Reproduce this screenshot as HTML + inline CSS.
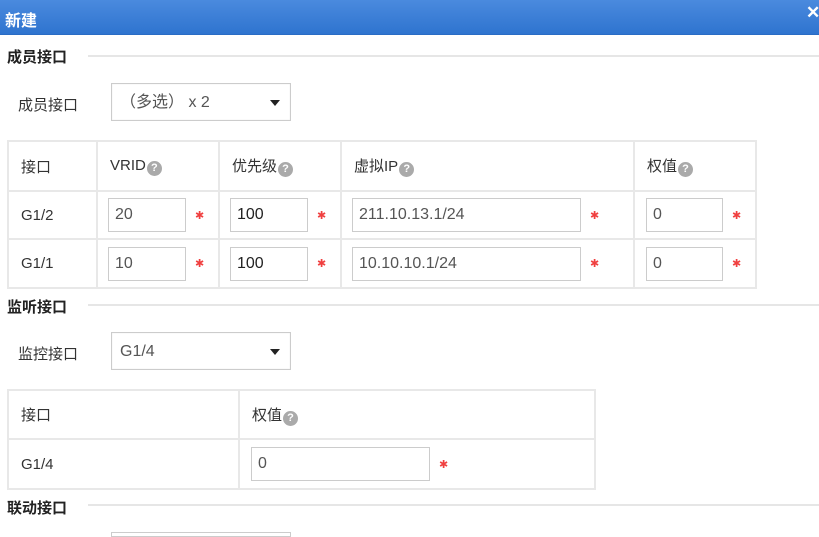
<!DOCTYPE html>
<html><head><meta charset="utf-8"><style>
*{margin:0;padding:0;box-sizing:border-box}
body{width:819px;height:535px;overflow:hidden;background:#fff;font-family:"Liberation Sans","Noto Sans CJK SC",sans-serif;font-size:14px;color:#333;position:relative}
.a{position:absolute}
.title{left:0;top:0;width:819px;height:35px;background:linear-gradient(#4a8ade,#2f74cf);border-bottom:1px solid #2a6cc4}
.title span{position:absolute;left:5px;top:7px;color:#fff;font-weight:bold;font-size:16px}
.close{left:806px;top:3px;color:#fff;font-weight:bold;font-size:17px}
.sec{font-weight:bold;font-size:15px;color:#222}
.line{height:2px;background:#e6e6e6}
.sel{border:1px solid #ccc;background:#fff;height:38px;width:180px;box-shadow:inset 0 0 1px #ddd}
.sel span{position:absolute;left:8px;top:0;line-height:38px;color:#555;font-size:16px}
.sel i{position:absolute;right:10px;top:16px;width:0;height:0;border-left:5px solid transparent;border-right:5px solid transparent;border-top:6px solid #222}
table{position:absolute;border-collapse:collapse}
td{border:2px solid #e8e8e8;padding:0 0 0 12px;font-size:15px;color:#333;position:relative;vertical-align:middle}
.in{display:inline-block;border:1px solid #ccc;height:34px;vertical-align:middle;padding:0 0 0 6px;line-height:32px;font-size:16px;color:#555}
.st{color:#f04040;font-size:11px;margin-left:9px;vertical-align:middle}
.q{display:inline-block;width:15px;height:15px;border-radius:50%;background:#aaa;color:#fff;font-size:11px;font-weight:bold;text-align:center;line-height:15px;margin-left:1px;vertical-align:-1px}
</style></head><body>
<div class="a title"><span>新建</span></div>
<div class="a close">✕</div>

<div class="a sec" style="left:7px;top:46px">成员接口</div>
<div class="a line" style="left:88px;top:55px;width:731px"></div>
<div class="a" style="left:18px;top:94px;font-size:15px">成员接口</div>
<div class="a sel" style="left:111px;top:83px"><span>（多选） x 2</span><i></i></div>

<table style="left:7px;top:140px">
<tr style="height:50px"><td style="width:89px">接口</td><td style="width:122px">VRID<span class="q">?</span></td><td style="width:122px">优先级<span class="q">?</span></td><td style="width:293px">虚拟IP<span class="q">?</span></td><td style="width:122px">权值<span class="q">?</span></td></tr>
<tr style="height:48px"><td>G1/2</td><td style="padding-left:10px"><span class="in" style="width:78px">20</span><span class="st">✱</span></td><td style="padding-left:10px"><span class="in" style="width:78px;color:#222">100</span><span class="st">✱</span></td><td style="padding-left:10px"><span class="in" style="width:229px">211.10.13.1/24</span><span class="st">✱</span></td><td style="padding-left:11px"><span class="in" style="width:77px">0</span><span class="st">✱</span></td></tr>
<tr style="height:49px"><td>G1/1</td><td style="padding-left:10px"><span class="in" style="width:78px">10</span><span class="st">✱</span></td><td style="padding-left:10px"><span class="in" style="width:78px;color:#222">100</span><span class="st">✱</span></td><td style="padding-left:10px"><span class="in" style="width:229px">10.10.10.1/24</span><span class="st">✱</span></td><td style="padding-left:11px"><span class="in" style="width:77px">0</span><span class="st">✱</span></td></tr>
</table>

<div class="a sec" style="left:7px;top:296px">监听接口</div>
<div class="a line" style="left:88px;top:304px;width:731px"></div>
<div class="a" style="left:18px;top:343px;font-size:15px">监控接口</div>
<div class="a sel" style="left:111px;top:332px"><span>G1/4</span><i></i></div>

<table style="left:7px;top:389px">
<tr style="height:49px"><td style="width:231px">接口</td><td style="width:356px">权值<span class="q">?</span></td></tr>
<tr style="height:50px"><td>G1/4</td><td style="padding-left:11px"><span class="in" style="width:179px">0</span><span class="st">✱</span></td></tr>
</table>

<div class="a sec" style="left:7px;top:497px">联动接口</div>
<div class="a line" style="left:88px;top:504px;width:731px"></div>
<div class="a" style="left:111px;top:532px;width:180px;height:5px;border:1px solid #ccc"></div>
</body></html>
